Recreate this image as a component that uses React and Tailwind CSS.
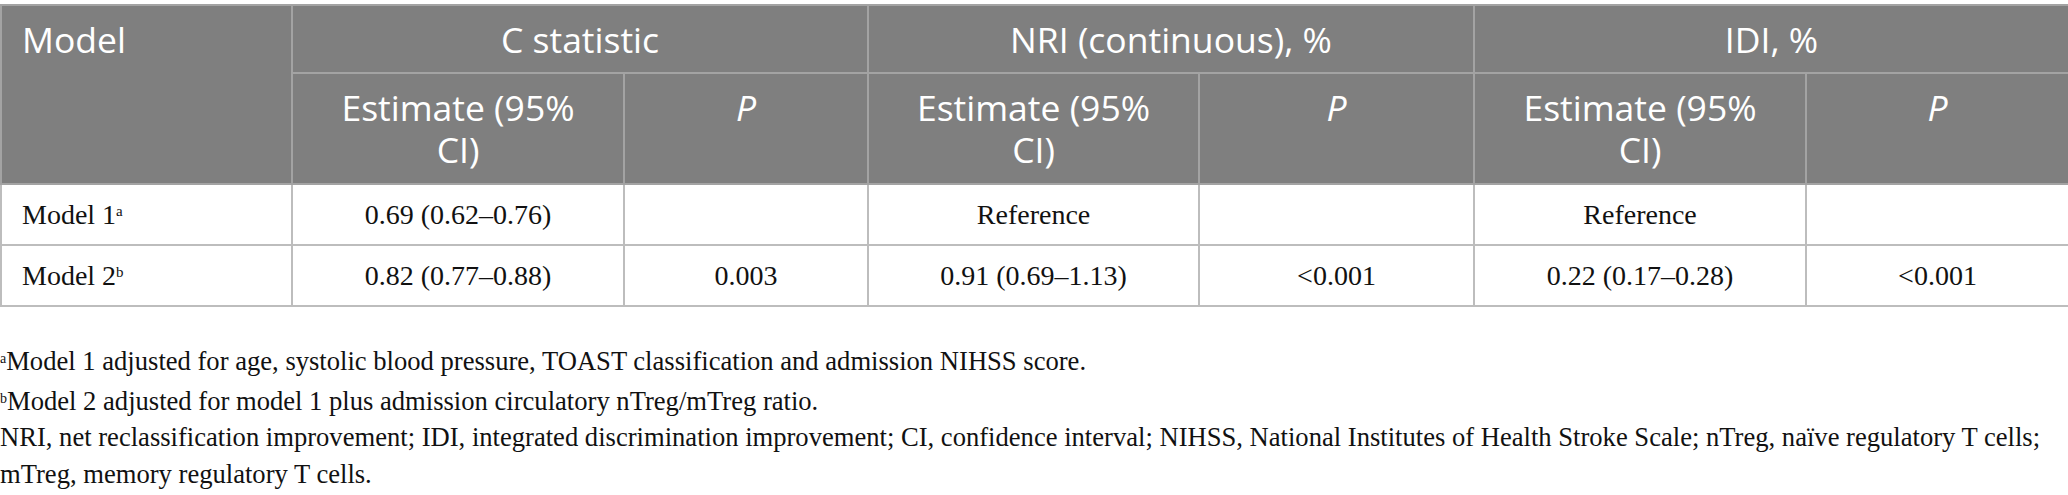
import React from "react";

const sans = { fontFamily: '"Open Sans", "Noto Sans", sans-serif' };
const serif = { fontFamily: '"Liberation Serif", "Times New Roman", serif' };

export default function App() {
  const th = "border-2 border-[#a3a3a3] align-top text-center font-normal px-6 pt-[12px] pb-[10px]";
  const td = "border-2 border-[#bdbdbd] text-center px-5 h-[61px] py-0 align-middle";
  return (
    <div className="w-[2068px] bg-white pt-[4px]">
      <table className="border-collapse w-[2068px] table-fixed text-[35.5px] leading-[42px]">
        <colgroup>
          <col className="w-[291px]" />
          <col className="w-[332px]" />
          <col className="w-[244px]" />
          <col className="w-[331px]" />
          <col className="w-[275px]" />
          <col className="w-[332px]" />
          <col className="w-[263px]" />
        </colgroup>
        <thead style={sans} className="bg-[#7f7f7f] text-white">
          <tr className="h-[68px]">
            <th rowSpan={2} className={th + " text-left pl-[20px]"}>Model</th>
            <th colSpan={2} className={th}>C statistic</th>
            <th colSpan={2} className={th}>NRI (continuous), %</th>
            <th colSpan={2} className={th}>IDI, %</th>
          </tr>
          <tr className="h-[111px]">
            <th className={th}>Estimate (95% CI)</th>
            <th className={th}><i>P</i></th>
            <th className={th}>Estimate (95% CI)</th>
            <th className={th}><i>P</i></th>
            <th className={th}>Estimate (95% CI)</th>
            <th className={th}><i>P</i></th>
          </tr>
        </thead>
        <tbody style={serif} className="text-[28px] leading-[34px] text-[#111]">
          <tr>
            <td className={td + " text-left pl-[20px]"}>Model 1<sup className="text-[15px]">a</sup></td>
            <td className={td}>0.69 (0.62–0.76)</td>
            <td className={td}></td>
            <td className={td}>Reference</td>
            <td className={td}></td>
            <td className={td}>Reference</td>
            <td className={td}></td>
          </tr>
          <tr>
            <td className={td + " text-left pl-[20px]"}>Model 2<sup className="text-[15px]">b</sup></td>
            <td className={td}>0.82 (0.77–0.88)</td>
            <td className={td}>0.003</td>
            <td className={td}>0.91 (0.69–1.13)</td>
            <td className={td}>&lt;0.001</td>
            <td className={td}>0.22 (0.17–0.28)</td>
            <td className={td}>&lt;0.001</td>
          </tr>
        </tbody>
      </table>
      <div style={serif} className="text-[26.6px] leading-[36.5px] text-[#111] pt-[36px] pr-[10px]">
        <p className="mb-[3px]"><sup className="text-[14px]">a</sup>Model 1 adjusted for age, systolic blood pressure, TOAST classification and admission NIHSS score.</p>
        <p><sup className="text-[14px]">b</sup>Model 2 adjusted for model 1 plus admission circulatory nTreg/mTreg ratio.</p>
        <p>NRI, net reclassification improvement; IDI, integrated discrimination improvement; CI, confidence interval; NIHSS, National Institutes of Health Stroke Scale; nTreg, naïve regulatory T cells; mTreg, memory regulatory T cells.</p>
      </div>
    </div>
  );
}
